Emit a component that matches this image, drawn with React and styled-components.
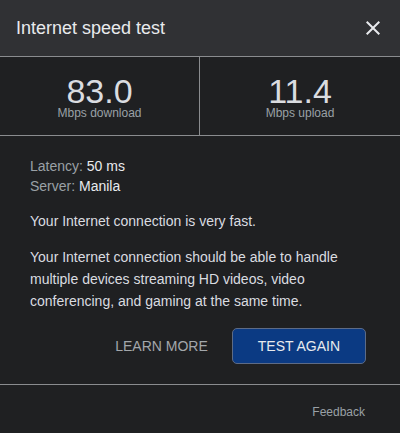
import React from "react";
import styled, { createGlobalStyle } from "styled-components";

const GlobalStyle = createGlobalStyle`
  html, body {
    margin: 0;
    padding: 0;
    background: #1f2022;
  }
  body {
    font-family: Arial, "Liberation Sans", Helvetica, sans-serif;
  }
`;

const Dialog = styled.div`
  width: 400px;
  height: 433px;
  background: #1f2022;
  display: flex;
  flex-direction: column;
  color: #e8eaed;
`;

const Header = styled.div`
  height: 56px;
  background: #303134;
  border-bottom: 1px solid #8a8c8f;
  display: flex;
  align-items: center;
  justify-content: space-between;
  padding: 0 15px 0 16px;
`;

const Title = styled.h1`
  margin: 0;
  font-size: 18px;
  font-weight: normal;
  color: #e8eaed;
`;

const CloseButton = styled.button`
  width: 24px;
  height: 24px;
  padding: 0;
  border: none;
  background: none;
  display: flex;
  align-items: center;
  justify-content: center;
  cursor: pointer;
`;

const Stats = styled.div`
  display: grid;
  grid-template-columns: 199px 1fr;
  height: 78px;
  border-bottom: 1px solid #8a8c8f;
`;

const Stat = styled.div`
  display: flex;
  flex-direction: column;
  align-items: center;
  padding-top: 18px;
  border-left: ${p => (p.divided ? "1px solid #8a8c8f" : "none")};
`;

const Value = styled.div`
  font-size: 34px;
  line-height: 32px;
  color: #dadce0;
`;

const Unit = styled.div`
  font-size: 12px;
  line-height: 12px;
  color: #9aa0a6;
`;

const Body = styled.div`
  padding: 20px 34px 0 30px;
  font-size: 14px;
`;

const Info = styled.div`
  line-height: 20px;
`;

const Label = styled.span`
  color: #9aa0a6;
`;

const Text = styled.p`
  margin: 14px 0 0;
  line-height: 22px;
  color: #dadce0;
`;

const Actions = styled.div`
  display: flex;
  justify-content: flex-end;
  align-items: center;
  gap: 24px;
  padding: 16px 34px 20px 0;
  border-bottom: 1px solid #8a8c8f;
`;

const ActionButton = styled.button`
  font-family: inherit;
  font-size: 14px;
  height: 36px;
  border-radius: 5px;
  cursor: pointer;
  padding: ${p => (p.primary ? "0 25px" : "0")};
  background: ${p => (p.primary ? "#0b3a83" : "transparent")};
  border: ${p => (p.primary ? "1px solid #5d6b86" : "none")};
  color: ${p => (p.primary ? "#e8eaed" : "#a3a7ab")};
`;

const Footer = styled.div`
  display: flex;
  justify-content: flex-end;
  padding: 20px 35px 0 0;
`;

const FeedbackLink = styled.a`
  font-size: 12px;
  line-height: 14px;
  color: #9aa0a6;
  text-decoration: none;
`;

const App = () => {
  return (
    <>
      <GlobalStyle />
      <Dialog>
        <Header>
          <Title>Internet speed test</Title>
          <CloseButton aria-label="Close">
            <svg width="24" height="24" viewBox="0 0 24 24">
              <path
                d="M19 6.41L17.59 5 12 10.59 6.41 5 5 6.41 10.59 12 5 17.59 6.41 19 12 13.41 17.59 19 19 17.59 13.41 12z"
                fill="#e8eaed"
              />
            </svg>
          </CloseButton>
        </Header>
        <Stats>
          <Stat>
            <Value>83.0</Value>
            <Unit>Mbps download</Unit>
          </Stat>
          <Stat divided>
            <Value>11.4</Value>
            <Unit>Mbps upload</Unit>
          </Stat>
        </Stats>
        <Body>
          <Info>
            <div>
              <Label>Latency:</Label> 50 ms
            </div>
            <div>
              <Label>Server:</Label> Manila
            </div>
          </Info>
          <Text>Your Internet connection is very fast.</Text>
          <Text>
            Your Internet connection should be able to handle multiple devices
            streaming HD videos, video conferencing, and gaming at the same
            time.
          </Text>
        </Body>
        <Actions>
          <ActionButton>LEARN MORE</ActionButton>
          <ActionButton primary>TEST AGAIN</ActionButton>
        </Actions>
        <Footer>
          <FeedbackLink href="#">Feedback</FeedbackLink>
        </Footer>
      </Dialog>
    </>
  );
};

export default App;
